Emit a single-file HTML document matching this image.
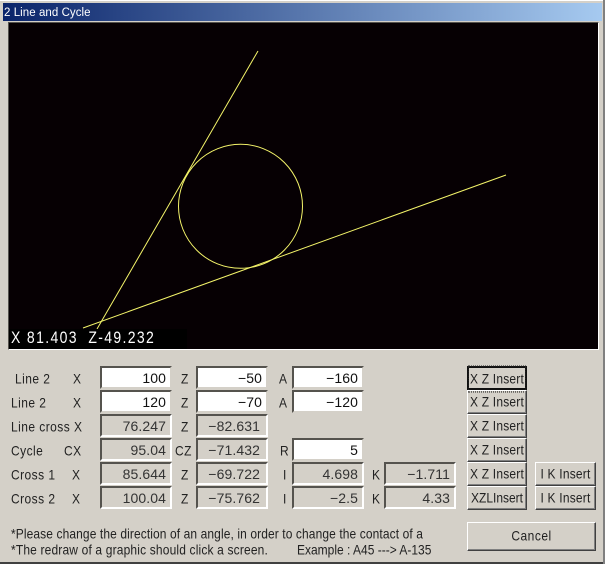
<!DOCTYPE html>
<html><head><meta charset="utf-8">
<style>
html,body{margin:0;padding:0;background:#d4d0c8}
#w{position:relative;width:605px;height:564px;overflow:hidden;background:#d4d0c8;font:12px "Liberation Sans",sans-serif;color:#000}
#w div{position:absolute;box-sizing:border-box}
.t{white-space:pre;height:16px;line-height:16px;letter-spacing:.45px;color:#222;transform:scaleY(1.15)}
.f{width:72px;height:23px;border:2px solid;border-color:#55534e #fff #fff #55534e;text-align:right;font-size:14px;line-height:20px;padding-right:4px;letter-spacing:.1px;color:#333}
.e{background:#fff;color:#111;border-color:#55534e #d4d0c8 #d4d0c8 #55534e}
.b{height:24px;border:1px solid;border-color:#fff #404040 #404040 #fff;box-shadow:inset -1px -1px 0 #808080;text-align:center;line-height:22px;letter-spacing:.2px;color:#222}
.b span{display:inline-block;transform:scaleY(1.12)}
</style></head><body><div id="w">
<div style="left:0;top:0;width:605px;height:1px;background:#fff"></div>
<div style="left:0;top:562px;width:605px;height:2px;background:#404040"></div>
<div style="left:603px;top:0;width:2px;height:564px;background:#808080"></div>
<div style="left:3px;top:3px;width:599px;height:18px;background:linear-gradient(90deg,#0a246a,#a6caf0)"></div>
<div class="t" style="left:4px;top:5px;color:#fff;font-size:11.5px;letter-spacing:.06px;transform:none">2 Line and Cycle</div>

<div style="left:8px;top:22px;width:591px;height:328px;background:#060003;border:1px solid;border-color:#55534e #fff #fff #55534e"></div>
<svg style="position:absolute;left:0;top:0" width="605" height="350">
<g fill="none" stroke="#f4f46a" stroke-width="1">
<path d="M83 328L506 175"/>
<path d="M97 329L258 51"/>
<circle cx="240.5" cy="206.3" r="62"/>
</g></svg>
<div style="left:9px;top:329px;width:178px;height:20px;background:#000"></div>
<div class="t" style="left:11px;top:329px;color:#fff;font-size:14px;letter-spacing:1.35px;transform:scaleY(1.2)">X 81.403  Z-49.232</div>

<div class="t" style="left:15px;top:371px">Line 2</div><div class="t" style="left:73px;top:371px">X</div>
<div class="t" style="left:11px;top:395px">Line 2</div><div class="t" style="left:73px;top:395px">X</div>
<div class="t" style="left:11px;top:419px">Line cross X</div>
<div class="t" style="left:11px;top:443px">Cycle</div><div class="t" style="left:64px;top:443px">CX</div>
<div class="t" style="left:11px;top:467px">Cross 1</div><div class="t" style="left:72px;top:467px">X</div>
<div class="t" style="left:11px;top:491px">Cross 2</div><div class="t" style="left:72px;top:491px">X</div>

<div class="t" style="left:181px;top:371px">Z</div>
<div class="t" style="left:181px;top:395px">Z</div>
<div class="t" style="left:181px;top:419px">Z</div>
<div class="t" style="left:175px;top:443px">CZ</div>
<div class="t" style="left:181px;top:467px">Z</div>
<div class="t" style="left:181px;top:491px">Z</div>
<div class="t" style="left:279px;top:371px">A</div>
<div class="t" style="left:279px;top:395px">A</div>
<div class="t" style="left:280px;top:443px">R</div>
<div class="t" style="left:283px;top:467px">I</div>
<div class="t" style="left:283px;top:491px">I</div>
<div class="t" style="left:372px;top:467px">K</div>
<div class="t" style="left:372px;top:491px">K</div>

<div class="f e" style="left:100px;top:366px">100</div>
<div class="f e" style="left:100px;top:390px">120</div>
<div class="f" style="left:100px;top:414px">76.247</div>
<div class="f" style="left:100px;top:438px">95.04</div>
<div class="f" style="left:100px;top:462px">85.644</div>
<div class="f" style="left:100px;top:486px">100.04</div>

<div class="f e" style="left:196px;top:366px">−50</div>
<div class="f e" style="left:196px;top:390px">−70</div>
<div class="f" style="left:196px;top:414px;padding-right:6px">−82.631</div>
<div class="f" style="left:196px;top:438px;padding-right:6px">−71.432</div>
<div class="f" style="left:196px;top:462px;padding-right:6px">−69.722</div>
<div class="f" style="left:196px;top:486px;padding-right:6px">−75.762</div>

<div class="f e" style="left:292px;top:366px">−160</div>
<div class="f e" style="left:292px;top:390px">−120</div>
<div class="f e" style="left:292px;top:438px">5</div>
<div class="f" style="left:292px;top:462px">4.698</div>
<div class="f" style="left:292px;top:486px">−2.5</div>

<div class="f" style="left:384px;top:462px">−1.711</div>
<div class="f" style="left:384px;top:486px">4.33</div>

<div class="b" style="left:467px;top:366px;width:60px;border:2px solid #111;box-shadow:none;line-height:20px"><span style="outline:1px dotted #222;padding:1px">X Z Insert</span></div>
<div class="b" style="left:467px;top:390px;width:60px"><span>X Z Insert</span></div>
<div class="b" style="left:467px;top:414px;width:60px"><span>X Z Insert</span></div>
<div class="b" style="left:467px;top:438px;width:60px"><span>X Z Insert</span></div>
<div class="b" style="left:467px;top:462px;width:60px"><span>X Z Insert</span></div>
<div class="b" style="left:467px;top:486px;width:60px;letter-spacing:0"><span>XZLInsert</span></div>
<div class="b" style="left:535px;top:462px;width:61px"><span>I K Insert</span></div>
<div class="b" style="left:535px;top:486px;width:61px"><span>I K Insert</span></div>
<div class="b" style="left:467px;top:522px;width:129px;height:29px;line-height:27px;letter-spacing:.5px"><span>Cancel</span></div>

<div class="t" style="left:11px;top:526px;letter-spacing:.1px">*Please change the direction of an angle, in order to change the contact of a</div>
<div class="t" style="left:11px;top:542px;letter-spacing:.16px">*The redraw of a graphic should click a screen.</div>
<div class="t" style="left:297px;top:542px;letter-spacing:0">Example : A45 ---&gt; A-135</div>
</div></body></html>
